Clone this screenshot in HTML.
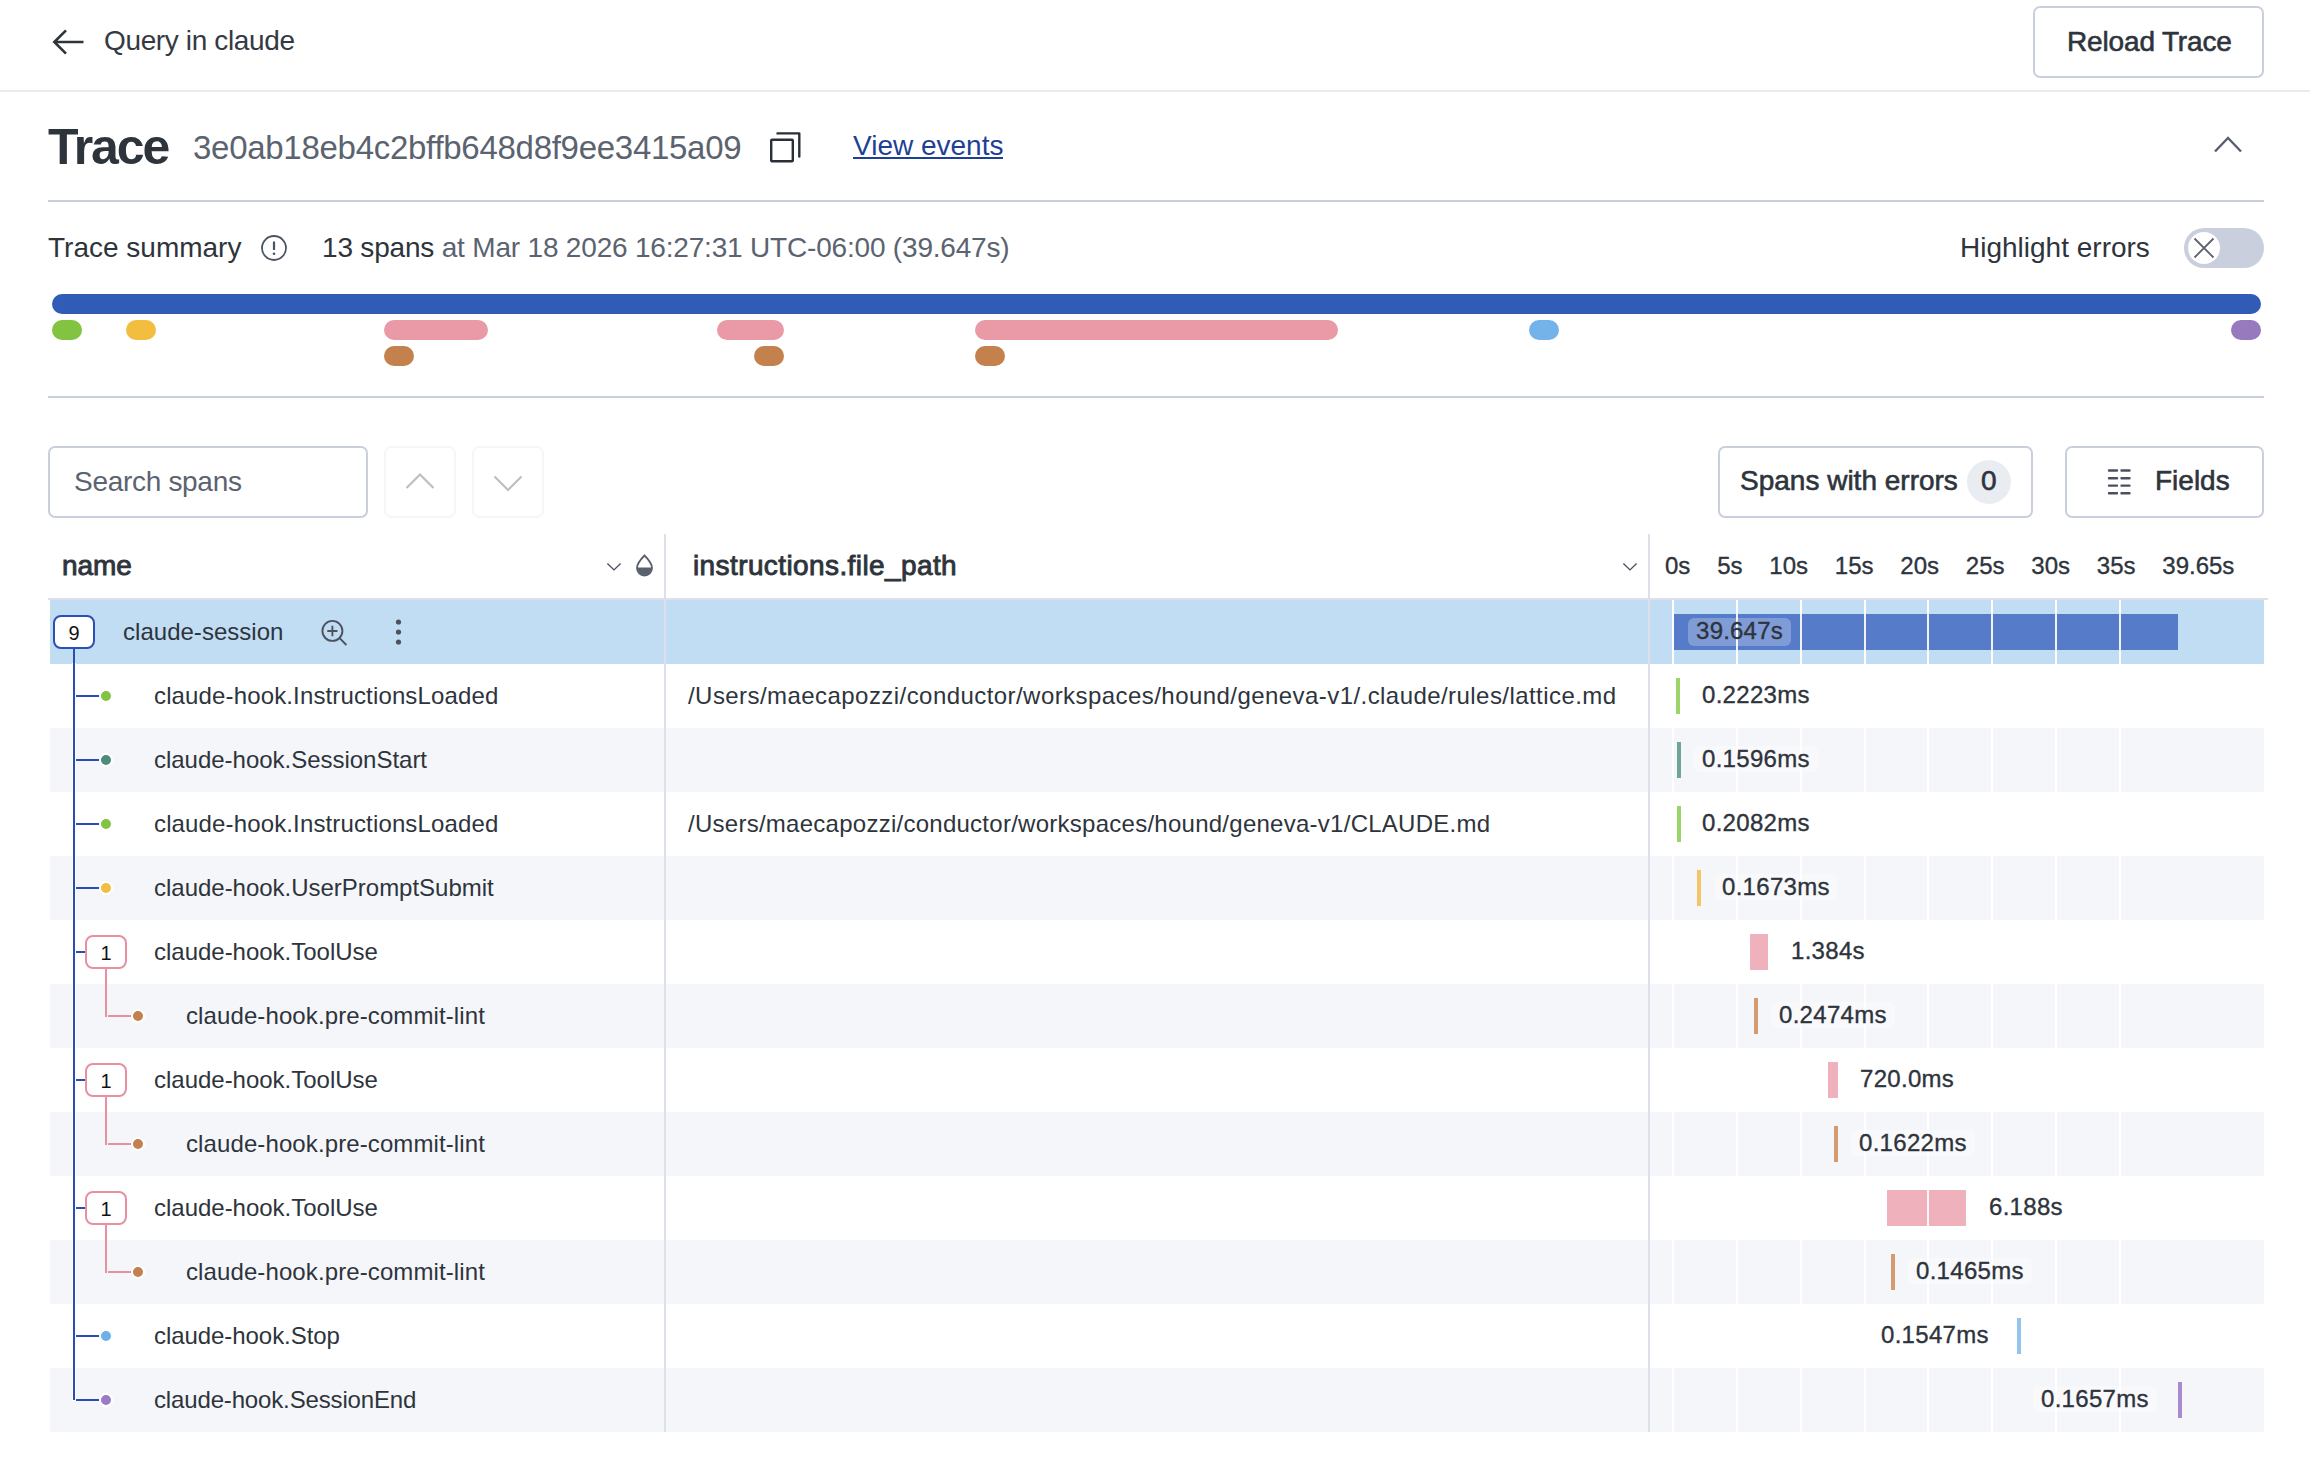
<!DOCTYPE html>
<html><head><meta charset="utf-8"><style>
html,body{margin:0;padding:0;background:#fff;width:2310px;height:1484px;overflow:hidden;position:relative}
body{font-family:"Liberation Sans",sans-serif;color:#2e343c}
.t{position:absolute;white-space:nowrap;line-height:40px;height:40px}
.abs{position:absolute}
.hr{position:absolute;height:2px}
.btn{position:absolute;box-sizing:border-box;border:2px solid #c9cfdd;border-radius:7px;background:#fff}
.rowbg{position:absolute;left:50px;width:2214px;height:64px}
.rowbg.hl{background:#c1ddf3}
.rowbg.st{background:#f5f6fa}
.grid{position:absolute;top:600px;height:832px;width:2px;background:#fff}
.grid2{position:absolute;top:600px;height:832px;width:2px;background:rgba(255,255,255,0.9)}
.coldiv{position:absolute;top:534px;height:898px;width:2px;background:#dde0e8}
.rn{font-size:24px;color:#2e343c;letter-spacing:0.14px}
.rp{font-size:24px;color:#2e343c;letter-spacing:0.44px}
.bar{position:absolute;height:36px}
.chip{position:absolute;height:26px;line-height:26px;padding:0 8px;border-radius:6px;font-size:24px;letter-spacing:0.3px;color:#2e343c;white-space:nowrap;-webkit-text-stroke:0.35px #2e343c}
.chip.st{background:rgba(255,255,255,0.4)}
.chip.root{background:rgba(255,255,255,0.25);padding:0;text-align:center;height:28px;line-height:28px;letter-spacing:0.2px}
.vl{position:absolute;width:2px;background:#2a4db3;box-shadow:0 0 0 1px #fff}
.hl2{position:absolute;height:2px;background:#2a4db3}
.pvl{position:absolute;width:2px;background:#e8909f}
.phl{position:absolute;height:2px;background:#e8909f}
.dot{position:absolute;width:10px;height:10px;border-radius:50%;border:2px solid #fff}
.badge{position:absolute;box-sizing:border-box;width:42px;height:34px;border:2.5px solid;border-radius:8px;background:#fff;color:#111;font-size:20px;line-height:32px;text-align:center}
.pill{position:absolute;height:20px;border-radius:10px}
.med{-webkit-text-stroke:0.6px currentColor}

</style></head><body>
<!-- header -->
<svg class="abs" style="left:50px;top:27px" width="36" height="30" viewBox="0 0 36 30"><path d="M33.5 15H5 M16 3.3 L4.3 15 L16 26.7" fill="none" stroke="#2e343c" stroke-width="2.6" stroke-linecap="butt"/></svg>
<div class="t" style="left:104px;top:21px;font-size:28px;color:#343a43;letter-spacing:-0.36px">Query in claude</div>
<div class="btn" style="left:2033px;top:6px;width:231px;height:72px"></div>
<div class="t med" style="left:2067px;top:22px;font-size:28px;color:#2e343c;letter-spacing:-0.15px">Reload Trace</div>
<div class="hr" style="left:0;top:90px;width:2310px;background:#e8ebf0"></div>

<!-- trace title -->
<div class="t" style="left:48px;top:122px;font-size:50px;font-weight:bold;line-height:50px;height:50px;color:#2e343c;letter-spacing:-2.1px">Trace</div>
<div class="t" style="left:193px;top:128px;font-size:33px;color:#5b6370;letter-spacing:-0.28px">3e0ab18eb4c2bffb648d8f9ee3415a09</div>
<svg class="abs" style="left:768px;top:130px" width="36" height="36" viewBox="0 0 36 36"><rect x="3.2" y="9.7" width="21.6" height="21.6" rx="0.8" fill="none" stroke="#2a2f37" stroke-width="2.4"/><path d="M9.5 3.4 H31.3 V26.5" fill="none" stroke="#2a2f37" stroke-width="2.4" stroke-linecap="round" stroke-linejoin="round"/></svg>
<div class="t" style="left:853px;top:126px;font-size:28px;color:#1e3f94">View events</div>
<div class="hr" style="left:853px;top:157px;width:150px;background:#1e3f94"></div>
<svg class="abs" style="left:2208px;top:130px" width="40" height="28" viewBox="0 0 40 28"><path d="M7 21.5 L20 8 L33 21.5" fill="none" stroke="#596170" stroke-width="2.4"/></svg>
<div class="hr" style="left:48px;top:200px;width:2216px;background:#c9cfdd"></div>

<!-- summary -->
<div class="t" style="left:48px;top:228px;font-size:28px;color:#2e343c">Trace summary</div>
<svg class="abs" style="left:258px;top:232px" width="32" height="32" viewBox="0 0 32 32"><circle cx="16" cy="16" r="12" fill="none" stroke="#4b5260" stroke-width="1.8"/><path d="M16 9.5 V18" stroke="#4b5260" stroke-width="2.2"/><circle cx="16" cy="21.8" r="1.3" fill="#4b5260"/></svg>
<div class="t" style="left:322px;top:228px;font-size:28px;color:#2e343c;letter-spacing:-0.19px">13 spans <span style="color:#5b6370">at Mar 18 2026 16:27:31 UTC-06:00 (39.647s)</span></div>
<div class="t" style="left:1960px;top:228px;font-size:28px;color:#2e343c">Highlight errors</div>
<div class="abs" style="left:2184px;top:228px;width:80px;height:40px;border-radius:20px;background:#c9cfdd"></div>
<div class="abs" style="left:2188px;top:232px;width:32px;height:32px;border-radius:50%;background:#fff"></div>
<svg class="abs" style="left:2188px;top:232px" width="32" height="32" viewBox="0 0 32 32"><path d="M6.5 6.5 L25.5 25.5 M25.5 6.5 L6.5 25.5" stroke="#5c616b" stroke-width="1.8"/></svg>

<!-- minimap -->
<div class="pill" style="left:52px;top:294px;width:2209px;background:#325bb7"></div>
<div class="pill" style="left:52px;top:320px;width:30px;background:#82c341"></div>
<div class="pill" style="left:126px;top:320px;width:30px;background:#f3bd40"></div>
<div class="pill" style="left:384px;top:320px;width:104px;background:#ea9aa6"></div>
<div class="pill" style="left:384px;top:346px;width:30px;background:#c4804d"></div>
<div class="pill" style="left:717px;top:320px;width:67px;background:#ea9aa6"></div>
<div class="pill" style="left:754px;top:346px;width:30px;background:#c4804d"></div>
<div class="pill" style="left:975px;top:320px;width:363px;background:#ea9aa6"></div>
<div class="pill" style="left:975px;top:346px;width:30px;background:#c4804d"></div>
<div class="pill" style="left:1529px;top:320px;width:30px;background:#73b3e9"></div>
<div class="pill" style="left:2231px;top:320px;width:30px;background:#9779bd"></div>
<div class="hr" style="left:48px;top:396px;width:2216px;background:#c9cfdd"></div>

<!-- toolbar -->
<div class="btn" style="left:48px;top:446px;width:320px;height:72px"></div>
<div class="t" style="left:74px;top:462px;font-size:28px;color:#5b6370;letter-spacing:-0.3px">Search spans</div>
<div class="btn" style="left:384px;top:446px;width:72px;height:72px;border-color:#f5f6f8"></div>
<div class="btn" style="left:472px;top:446px;width:72px;height:72px;border-color:#f5f6f8"></div>
<svg class="abs" style="left:400px;top:466px" width="40" height="30" viewBox="0 0 40 30"><path d="M6.5 22 L20 8.5 L33.5 22" fill="none" stroke="#bdbfc0" stroke-width="2.2"/></svg>
<svg class="abs" style="left:488px;top:468px" width="40" height="30" viewBox="0 0 40 30"><path d="M6.5 8.5 L20 22 L33.5 8.5" fill="none" stroke="#bdbfc0" stroke-width="2.2"/></svg>
<div class="btn" style="left:1718px;top:446px;width:315px;height:72px"></div>
<div class="t med" style="left:1740px;top:461px;font-size:28px;color:#2e343c">Spans with errors</div>
<div class="abs" style="left:1967px;top:460px;width:44px;height:44px;border-radius:50%;background:#e9ecf1"></div>
<div class="t med" style="left:1981px;top:461px;font-size:28px;color:#2e343c">0</div>
<div class="btn" style="left:2065px;top:446px;width:199px;height:72px"></div>
<svg class="abs" style="left:2104px;top:464px" width="30" height="36" viewBox="0 0 30 36"><g stroke="#4a5060" stroke-width="2.4" stroke-linecap="round"><path d="M5 6.5H13 M17.5 6.5H25.5 M5 14.2H13 M17.5 14.2H25.5 M5 21.6H13 M17.5 21.6H25.5 M5 29.3H13 M17.5 29.3H25.5"/></g></svg>
<div class="t med" style="left:2155px;top:461px;font-size:28px;color:#2e343c">Fields</div>

<!-- table header -->
<div class="t" style="left:62px;top:546px;font-size:28px;color:#2e343c;letter-spacing:-0.1px;-webkit-text-stroke:0.9px #2e343c">name</div>
<svg class="abs" style="left:602px;top:556px" width="24" height="20" viewBox="0 0 24 20"><path d="M5.4 7.6 L12 13.9 L18.6 7.6" fill="none" stroke="#4a5060" stroke-width="1.4"/></svg>
<svg class="abs" style="left:632px;top:553px" width="26" height="26" viewBox="0 0 26 26"><path d="M12.5 2.5 C9 6 5 10 5 15 A7.5 7.5 0 0 0 20 15 C20 10 16 6 12.5 2.5 Z" fill="none" stroke="#5a606c" stroke-width="1.8"/><path d="M5 14.6 H20 A7.5 7.5 0 0 1 5 14.6 Z" fill="#5a606c"/></svg>
<div class="t" style="left:693px;top:546px;font-size:28px;color:#2e343c;letter-spacing:0.4px;-webkit-text-stroke:0.9px #2e343c">instructions.file_path</div>
<svg class="abs" style="left:1618px;top:556px" width="24" height="20" viewBox="0 0 24 20"><path d="M5.4 7.6 L12 13.9 L18.6 7.6" fill="none" stroke="#4a5060" stroke-width="1.4"/></svg>
<div class="abs" style="left:1665px;top:546px;height:40px;display:flex;gap:26.8px;font-size:24px;line-height:40px;color:#2e343c;-webkit-text-stroke:0.35px #2e343c"><span>0s</span><span>5s</span><span>10s</span><span>15s</span><span>20s</span><span>25s</span><span>30s</span><span>35s</span><span>39.65s</span></div>
<div class="hr" style="left:48px;top:598px;width:2220px;background:#dde0e8"></div>

<div class="rowbg hl" style="top:600px"></div><div class="rowbg st" style="top:728px"></div><div class="rowbg st" style="top:856px"></div><div class="rowbg st" style="top:984px"></div><div class="rowbg st" style="top:1112px"></div><div class="rowbg st" style="top:1240px"></div><div class="rowbg st" style="top:1368px"></div><div class="grid" style="left:1672px"></div><div class="grid" style="left:1736px"></div><div class="grid" style="left:1800px"></div><div class="grid" style="left:1864px"></div><div class="grid" style="left:1927px"></div><div class="grid" style="left:1991px"></div><div class="grid" style="left:2055px"></div><div class="grid" style="left:2119px"></div><div class="coldiv" style="left:664px"></div><div class="coldiv" style="left:1648px"></div><div class="t rn" style="left:123px;top:612px;letter-spacing:0.025px">claude-session</div><div class="bar" style="left:1674px;top:614px;width:504px;background:#557bc9"></div><div class="t rn" style="left:154px;top:676px;letter-spacing:0.14px">claude-hook.InstructionsLoaded</div><div class="t rp" style="left:688px;top:676px;letter-spacing:0.44px">/Users/maecapozzi/conductor/workspaces/hound/geneva-v1/.claude/rules/lattice.md</div><div class="bar" style="left:1676px;top:678px;width:4px;background:#9dd46a"></div><div class="t rn" style="left:154px;top:740px;letter-spacing:-0.02px">claude-hook.SessionStart</div><div class="bar" style="left:1677px;top:742px;width:4px;background:#6fa597"></div><div class="t rn" style="left:154px;top:804px;letter-spacing:0.14px">claude-hook.InstructionsLoaded</div><div class="t rp" style="left:688px;top:804px;letter-spacing:0.26px">/Users/maecapozzi/conductor/workspaces/hound/geneva-v1/CLAUDE.md</div><div class="bar" style="left:1677px;top:806px;width:4px;background:#9dd46a"></div><div class="t rn" style="left:154px;top:868px;letter-spacing:-0.016px">claude-hook.UserPromptSubmit</div><div class="bar" style="left:1697px;top:870px;width:4px;background:#f3c566"></div><div class="t rn" style="left:154px;top:932px;letter-spacing:-0.016px">claude-hook.ToolUse</div><div class="bar" style="left:1750px;top:934px;width:18px;background:#efb1bc"></div><div class="t rn" style="left:186px;top:996px;letter-spacing:0.105px">claude-hook.pre-commit-lint</div><div class="bar" style="left:1754px;top:998px;width:4px;background:#d49a70"></div><div class="t rn" style="left:154px;top:1060px;letter-spacing:-0.016px">claude-hook.ToolUse</div><div class="bar" style="left:1828px;top:1062px;width:10px;background:#efb1bc"></div><div class="t rn" style="left:186px;top:1124px;letter-spacing:0.105px">claude-hook.pre-commit-lint</div><div class="bar" style="left:1834px;top:1126px;width:4px;background:#d49a70"></div><div class="t rn" style="left:154px;top:1188px;letter-spacing:-0.016px">claude-hook.ToolUse</div><div class="bar" style="left:1887px;top:1190px;width:79px;background:#efb1bc"></div><div class="t rn" style="left:186px;top:1252px;letter-spacing:0.105px">claude-hook.pre-commit-lint</div><div class="bar" style="left:1891px;top:1254px;width:4px;background:#d49a70"></div><div class="t rn" style="left:154px;top:1316px;letter-spacing:-0.06px">claude-hook.Stop</div><div class="bar" style="left:2017px;top:1318px;width:4px;background:#94c4ee"></div><div class="t rn" style="left:154px;top:1380px;letter-spacing:-0.15px">claude-hook.SessionEnd</div><div class="bar" style="left:2178px;top:1382px;width:4px;background:#a98bd1"></div><div class="grid2" style="left:1672px"></div><div class="grid2" style="left:1736px"></div><div class="grid2" style="left:1800px"></div><div class="grid2" style="left:1864px"></div><div class="grid2" style="left:1927px"></div><div class="grid2" style="left:1991px"></div><div class="grid2" style="left:2055px"></div><div class="grid2" style="left:2119px"></div><div class="chip root" style="left:1688px;top:618px;width:103px;line-height:26px">39.647s</div><div class="chip" style="left:1694px;top:682px;line-height:25px">0.2223ms</div><div class="chip st" style="left:1694px;top:746px;line-height:25px">0.1596ms</div><div class="chip" style="left:1694px;top:810px;line-height:25px">0.2082ms</div><div class="chip st" style="left:1714px;top:874px;line-height:25px">0.1673ms</div><div class="chip" style="left:1783px;top:938px;line-height:25px">1.384s</div><div class="chip st" style="left:1771px;top:1002px;line-height:25px">0.2474ms</div><div class="chip" style="left:1852px;top:1066px;line-height:25px">720.0ms</div><div class="chip st" style="left:1851px;top:1130px;line-height:25px">0.1622ms</div><div class="chip" style="left:1981px;top:1194px;line-height:25px">6.188s</div><div class="chip st" style="left:1908px;top:1258px;line-height:25px">0.1465ms</div><div class="chip" style="left:1873px;top:1322px;line-height:25px">0.1547ms</div><div class="chip st" style="left:2033px;top:1386px;line-height:25px">0.1657ms</div><div class="vl" style="left:73px;top:664px;height:736px"></div><div class="vl" style="left:73px;top:648px;height:16px;box-shadow:none"></div><div class="badge" style="left:53px;top:615px;border-color:#2b4fb5">9</div><svg class="abs" style="left:310px;top:610px" width="100" height="42" viewBox="310 610 100 42"><g stroke="#4d535e" stroke-width="1.9" fill="none"><circle cx="332.4" cy="630.9" r="10"/><path d="M327.3 631H337.5 M332.4 625.8V636.2 M339.6 638.2 L346.4 645"/></g><g fill="#4d535e"><circle cx="398.5" cy="622" r="2.6"/><circle cx="398.5" cy="632" r="2.6"/><circle cx="398.5" cy="642" r="2.6"/></g></svg><div class="hl2" style="left:76px;top:695px;width:23px"></div><div class="dot" style="left:99px;top:689px;background:#82c341"></div><div class="hl2" style="left:76px;top:759px;width:23px"></div><div class="dot" style="left:99px;top:753px;background:#4b8c7d"></div><div class="hl2" style="left:76px;top:823px;width:23px"></div><div class="dot" style="left:99px;top:817px;background:#82c341"></div><div class="hl2" style="left:76px;top:887px;width:23px"></div><div class="dot" style="left:99px;top:881px;background:#f3bd40"></div><div class="hl2" style="left:76px;top:951px;width:9px"></div><div class="badge" style="left:85px;top:935px;border-color:#e8909f">1</div><div class="pvl" style="left:105px;top:969px;height:48px"></div><div class="phl" style="left:108px;top:1015px;width:23px"></div><div class="dot" style="left:131px;top:1009px;background:#c4804d"></div><div class="hl2" style="left:76px;top:1079px;width:9px"></div><div class="badge" style="left:85px;top:1063px;border-color:#e8909f">1</div><div class="pvl" style="left:105px;top:1097px;height:48px"></div><div class="phl" style="left:108px;top:1143px;width:23px"></div><div class="dot" style="left:131px;top:1137px;background:#c4804d"></div><div class="hl2" style="left:76px;top:1207px;width:9px"></div><div class="badge" style="left:85px;top:1191px;border-color:#e8909f">1</div><div class="pvl" style="left:105px;top:1225px;height:48px"></div><div class="phl" style="left:108px;top:1271px;width:23px"></div><div class="dot" style="left:131px;top:1265px;background:#c4804d"></div><div class="hl2" style="left:76px;top:1335px;width:23px"></div><div class="dot" style="left:99px;top:1329px;background:#6db1ea"></div><div class="hl2" style="left:76px;top:1399px;width:23px"></div><div class="dot" style="left:99px;top:1393px;background:#9a7bc6"></div>
</body></html>
